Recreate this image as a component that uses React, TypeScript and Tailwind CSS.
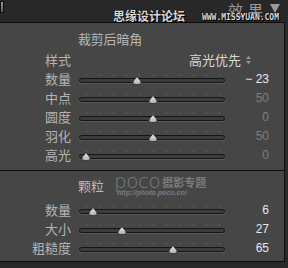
import React from "react";

type Row = { label: string; pos: number; value: string; active?: boolean };

const vignette: Row[] = [
  { label: "数量", pos: 58, value: "− 23", active: true },
  { label: "中点", pos: 74, value: "50" },
  { label: "圆度", pos: 74, value: "0" },
  { label: "羽化", pos: 74, value: "50" },
  { label: "高光", pos: 7, value: "0" },
];

const grain: Row[] = [
  { label: "数量", pos: 14, value: "6", active: true },
  { label: "大小", pos: 43, value: "27", active: true },
  { label: "粗糙度", pos: 94, value: "65", active: true },
];

const ticks = [7, 20, 34, 47, 60, 74, 87, 100, 114, 127, 140];

function Thumb() {
  return (
    <svg width="10" height="9" viewBox="0 0 10 9" className="block">
      <path
        d="M5 0.5 L8.6 5 Q9.6 6.5 8.6 7.6 Q7.8 8.5 5 8.5 Q2.2 8.5 1.4 7.6 Q0.4 6.5 1.4 5 Z"
        fill="#bdbdbd"
        stroke="#2a2a2a"
        strokeWidth="0.8"
      />
      <path d="M5 1.5 L7.8 5.2 L2.2 5.2 Z" fill="#d2d2d2" />
    </svg>
  );
}

function Slider({ pos }: { pos: number }) {
  return (
    <div className="relative w-[146px] h-[19px]">
      {ticks.map((t) => (
        <div key={t} className="absolute top-[5px] w-px h-[2px] bg-[#5e5e5e]" style={{ left: t }} />
      ))}
      <div className="absolute left-0 right-0 top-[9px] h-[5px] rounded-full bg-[#3b3b3b] border border-[#151515] shadow-[0_1px_0_#585858]" />
      <div className="absolute top-[7px]" style={{ left: pos - 5 }}>
        <Thumb />
      </div>
    </div>
  );
}

function SliderRow({ row }: { row: Row }) {
  return (
    <div className="flex items-center h-[19px]">
      <div className="w-[71px] text-right text-[13px] text-[#b4b4b4] leading-none">{row.label}</div>
      <div className="ml-[8px]">
        <Slider pos={row.pos} />
      </div>
      <div
        className={`w-[44px] text-right text-[12px] leading-none font-['Liberation_Sans',sans-serif] ${
          row.active ? "text-[#e4e8f0]" : "text-[#7e7e7e]"
        }`}
      >
        {row.value}
      </div>
    </div>
  );
}

export default function App() {
  return (
    <div className="w-[288px] h-[268px] bg-[#2a2a2a] overflow-hidden font-['Noto_Sans_CJK_SC',sans-serif] select-none">
      {/* header */}
      <div className="relative h-[22px] bg-[#282828]">
        <div className="absolute left-0 top-[1px] w-[4px] h-[12px] bg-gradient-to-b from-[#9a9a9a] to-[#5c5c5c] border border-[#111]" />
        <div className="absolute left-[228px] top-[2px] h-[16px] flex gap-[5px] text-[15px] leading-[16px] text-[#9c9c9c]">
          <span>效</span>
          <span>果</span>
        </div>
        <svg className="absolute left-[270px] top-[4px]" width="10" height="9" viewBox="0 0 10 9">
          <path d="M0 0 H10 L5 9 Z" fill="#9a9a9a" />
        </svg>
        <div className="absolute left-[113px] top-[10px] h-[12px] w-[166px] flex items-end justify-between leading-none">
          <span className="text-[12px] font-bold text-[#d8d8d8] [text-shadow:0_0_1px_#000,1px_1px_0_#000]">思缘设计论坛</span>
          <span className="text-[8px] font-bold text-[#d8d8d8] font-['DejaVu_Sans_Mono',monospace] [text-shadow:0_0_1px_#000,1px_1px_0_#000]">
            WWW.MISSYUAN.COM
          </span>
        </div>
      </div>

      {/* panel */}
      <div className="w-[285px] h-[240px] border-t border-r border-b border-[#0c0c0c] bg-[#464646]">
        <div className="h-[30px] flex items-center pl-[78px] pt-[2px]">
          <span className="text-[13px] tracking-[-0.2px] text-[#b8b8b8]">裁剪后暗角</span>
        </div>
        <div className="h-[13px] flex items-center">
          <div className="w-[71px] text-right text-[13px] text-[#b4b4b4] leading-none">样式</div>
          <div className="ml-[118px] flex items-center gap-[5px] text-[13px] text-[#d6d6d6] leading-none">
            高光优先
            <svg width="5" height="8" viewBox="0 0 5 8">
              <path d="M0 3 L2.5 0 L5 3 Z M0 5 L2.5 8 L5 5 Z" fill="#9a9a9a" />
            </svg>
          </div>
        </div>
        <div className="pt-[3px]">
          {vignette.map((r) => (
            <SliderRow key={r.label} row={r} />
          ))}
        </div>
        <div className="mt-[6px] h-px bg-[#0c0c0c]" />
        <div className="h-[26px] flex items-center pt-[4px]">
          <span className="ml-[78px] text-[13px] text-[#b8b8b8]">颗粒</span>
          <div className="ml-[10px] -mt-[2px] text-[#7c7c7c] leading-none">
            <div className="flex items-end gap-[2px] h-[13px]">
              <span className="text-[20px] leading-[13px] font-['DejaVu_Sans',sans-serif] font-light tracking-[-0.5px]">poco</span>
              <span className="text-[11px] font-bold">摄影专题</span>
            </div>
            <div className="ml-[3px] mt-px text-[7px] font-bold italic font-['Liberation_Sans',sans-serif]">
              http://photo.poco.cn/
            </div>
          </div>
        </div>
        <div className="pt-[3px]">
          {grain.map((r) => (
            <SliderRow key={r.label} row={r} />
          ))}
        </div>
      </div>
    </div>
  );
}
